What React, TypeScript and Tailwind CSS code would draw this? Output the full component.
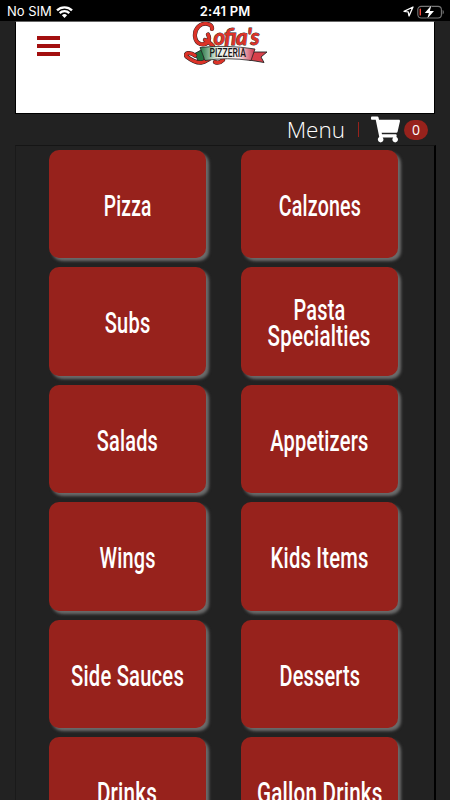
import React from 'react';
import { FaShoppingCart } from 'react-icons/fa';

interface MenuLine {
  text: string;
  // condenses the label face to the narrow signage proportions
  squeeze: string;
}

const CATEGORIES: MenuLine[][] = [
  [{ text: 'Pizza', squeeze: 'scale-x-[0.65]' }],
  [{ text: 'Calzones', squeeze: 'scale-x-[0.665]' }],
  [{ text: 'Subs', squeeze: 'scale-x-[0.68]' }],
  [
    { text: 'Pasta', squeeze: 'scale-x-[0.675]' },
    { text: 'Specialties', squeeze: 'scale-x-[0.695]' },
  ],
  [{ text: 'Salads', squeeze: 'scale-x-[0.675]' }],
  [{ text: 'Appetizers', squeeze: 'scale-x-[0.68]' }],
  [{ text: 'Wings', squeeze: 'scale-x-[0.675]' }],
  [{ text: 'Kids Items', squeeze: 'scale-x-[0.685]' }],
  [{ text: 'Side Sauces', squeeze: 'scale-x-[0.685]' }],
  [{ text: 'Desserts', squeeze: 'scale-x-[0.675]' }],
  [{ text: 'Drinks', squeeze: 'scale-x-[0.7]' }],
  [{ text: 'Gallon Drinks', squeeze: 'scale-x-[0.7]' }],
];

const WifiIcon: React.FC = () => (
  <svg width="17" height="12" viewBox="0 0 17 12" fill="none" stroke="#fff" strokeWidth="2.3">
    <path d="M1 4.4a10.6 10.6 0 0 1 15 0" />
    <path d="M3.7 7.1a6.8 6.8 0 0 1 9.6 0" />
    <path d="M8.5 12 5.9 9.2a3.7 3.7 0 0 1 5.2 0z" fill="#fff" stroke="none" />
  </svg>
);

const BatteryIcon: React.FC = () => (
  <svg width="28" height="14" viewBox="0 0 28 14">
    <rect x="0.8" y="1.4" width="23.6" height="11.6" rx="3.4" fill="none" stroke="#777" strokeWidth="1.1" />
    <path d="M25.6 5v4.4c1.6-.5 1.6-3.9 0-4.4z" fill="#777" />
    <rect x="2.6" y="3.6" width="1.4" height="7" rx="0.6" fill="#fb4a3c" />
    <path d="M14.4.2 7.8 8h4.1l-1.7 5.8L17 6h-4.2z" fill="#fff" stroke="#000" strokeWidth="0.8" paintOrder="stroke" />
  </svg>
);

const StatusBar: React.FC = () => (
  <div className="flex h-[21px] shrink-0 items-center bg-black pt-[2px] font-['Inter','Liberation_Sans',sans-serif] text-[13px] text-white">
    <div className="flex flex-1 items-center gap-1 pl-[7px]">
      <span>No SIM</span>
      <WifiIcon />
    </div>
    <span className="-ml-[2px] font-semibold tracking-[0.15px]">2:41 PM</span>
    <div className="flex flex-1 items-center justify-end gap-[3px] pr-[5px]">
      <svg width="11" height="11" viewBox="0 0 11 11" fill="none" stroke="#fff" strokeWidth="1.3" strokeLinejoin="round">
        <path d="M1 5.4 10 1 6 10 5.2 5.8z" />
      </svg>
      <BatteryIcon />
    </div>
  </div>
);

const INITIAL = 'M28 7C29 1 19 0 14.500 4.500C9 10 10 20 16.500 22C23 23.500 27 18 24 12.500M21 18C24 19 27 22 29 24';
const SWASH = 'M11 33.5C6 29.5 0 31 2.5 34.5C7 38 12 41.5 18 40.5C21 40 23 38 25 37M31 40q4 2 8-2';

const Logo: React.FC = () => (
  <svg width="84" height="44" viewBox="0 0 84 44" aria-label="Sofia's Pizzeria" className="-ml-[20px]">
    <defs>
      <linearGradient id="ribbon" x1="0" x2="1">
        <stop offset="0" stopColor="#20733f" />
        <stop offset="0.32" stopColor="#e9f2ea" />
        <stop offset="0.7" stopColor="#fbeaec" />
        <stop offset="1" stopColor="#c9344a" />
      </linearGradient>
    </defs>
    <path d="M67 30 83 30 77 35 80 40.5 65 38z" fill="#d8404a" stroke="#222" strokeWidth="0.9" />
    <path d="M19 27 8 33 13 36 14 40 20 39z" fill="#20733f" stroke="#222" strokeWidth="0.9" />
    {/* the initial and the tail that sweeps round under the ribbon */}
    <g fill="none" strokeLinecap="round">
      <path d={SWASH} stroke="#222" strokeWidth="4.2" />
      <path d={SWASH} stroke="#dc3328" strokeWidth="3.2" />
      <path d={INITIAL} stroke="#222" strokeWidth="4.2" />
      <path d={INITIAL} stroke="#dc3328" strokeWidth="3.4" />
    </g>
    <text
      x="29.5"
      y="23"
      textLength="46"
      lengthAdjust="spacing"
      fill="#dc3328"
      stroke="#222"
      strokeWidth="0.8"
      paintOrder="stroke"
      className="font-['Lato',sans-serif] text-[22px] font-black italic"
    >
      ofia&#39;s
    </text>
    <path d="M16 25.5Q42 22.5 71 27L67 38.5Q43 35 21 38.5z" fill="url(#ribbon)" stroke="#222" strokeWidth="0.8" />
    <text
      x="25.5"
      y="35.3"
      textLength="36.5"
      lengthAdjust="spacingAndGlyphs"
      fill="#151515"
      className="font-['Roboto',sans-serif] text-[13px] font-medium"
    >
      PIZZERIA
    </text>
  </svg>
);

const CategoryTile: React.FC<{ lines: MenuLine[] }> = ({ lines }) => (
  <button
    type="button"
    className="flex h-[108.4px] flex-col items-center justify-center rounded-[10px] bg-[#97221c] pt-[3.5px] font-['Roboto',sans-serif] text-[29.5px] leading-[26px] font-medium tracking-[0.3px] whitespace-nowrap text-white shadow-[3px_3px_3px_#6b6b6b]"
  >
    {lines.map((line) => (
      <span key={line.text} className={line.squeeze}>
        {line.text}
      </span>
    ))}
  </button>
);

export default function App() {
  return (
    <div className="flex h-[800px] w-[450px] flex-col overflow-hidden bg-[#222]">
      <StatusBar />

      <header className="mx-[15px] flex h-[93px] shrink-0 items-start border border-t-[#666] border-r-black border-b-black border-l-black bg-white">
        <div className="flex-1 pt-[14px] pl-[21px]">
          <div className="flex w-[23px] flex-col gap-1">
            <span className="h-1 bg-[#a30f0f]" />
            <span className="h-1 bg-[#a30f0f]" />
            <span className="h-1 bg-[#a30f0f]" />
          </div>
        </div>
        <Logo />
        <div className="flex-1" />
      </header>

      <nav className="flex h-[31px] shrink-0 items-center justify-end pr-[22px] text-white">
        <span className="font-['Open_Sans',sans-serif] text-[22.5px] font-[350]">Menu</span>
        <span className="ml-[13px] h-[15px] w-px bg-[#97221c]" />
        <FaShoppingCart className="ml-3" size={29} />
        <span className="ml-1 flex h-5 w-6 items-center justify-center rounded-full bg-[#97221c] font-['Open_Sans',sans-serif] text-sm">
          0
        </span>
      </nav>

      <main className="mr-[14px] ml-[15px] grid flex-1 grid-cols-[156.5px_157px] content-start gap-x-[35.5px] gap-y-[9px] border-t border-r-2 border-l border-t-[#151515] border-r-black border-l-[#1a1a1a] pt-1 pl-[33px]">
        {CATEGORIES.map((lines) => (
          <CategoryTile key={lines[0].text} lines={lines} />
        ))}
      </main>
    </div>
  );
}
